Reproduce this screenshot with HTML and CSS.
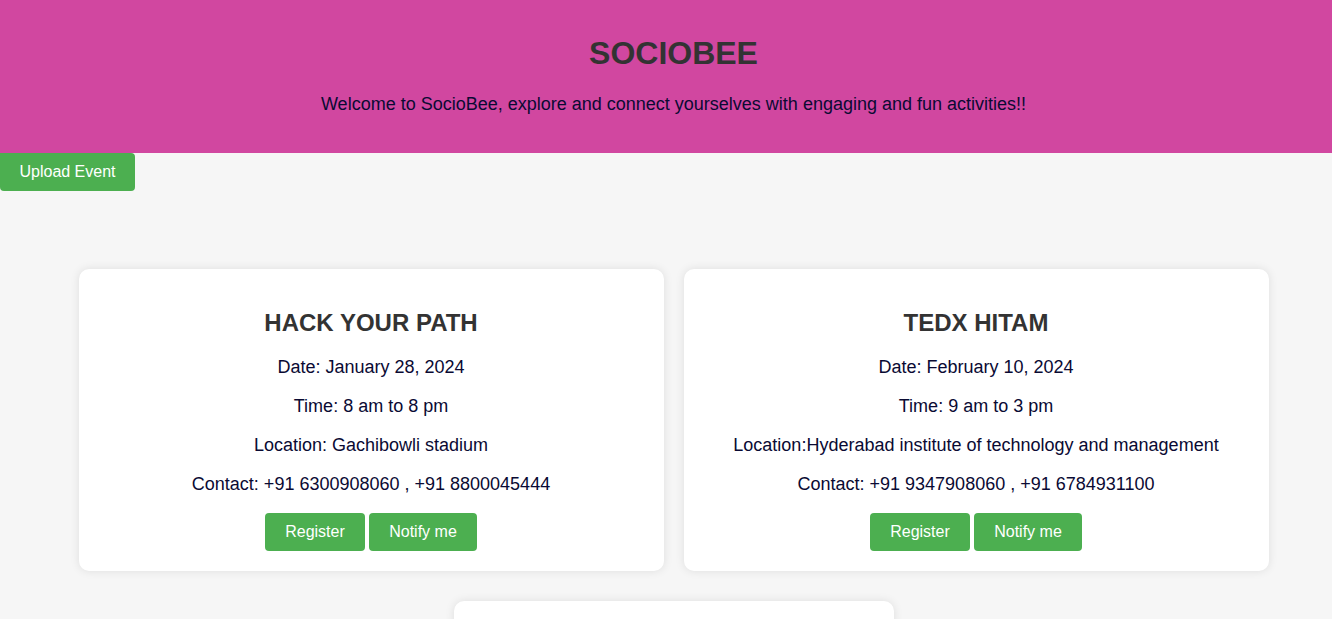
FILE: index.html
```html
<!DOCTYPE html>
<html lang="en">
<head>
<meta charset="utf-8">
<title>SocioBee</title>
<link rel="stylesheet" href="styles.css">
</head>
<body>
<header class="hero">
  <h1 class="hero__title">SOCIOBEE</h1>
  <p class="hero__tagline">Welcome to SocioBee, explore and connect yourselves with engaging and fun activities!!</p>
</header>
<button class="btn btn--upload">Upload Event</button>
<main class="events">
  <section class="card card--wide">
    <h2 class="card__title">HACK YOUR PATH</h2>
    <p class="card__line">Date: January 28, 2024</p>
    <p class="card__line">Time: 8 am to 8 pm</p>
    <p class="card__line">Location: Gachibowli stadium</p>
    <p class="card__line">Contact: +91 6300908060 , +91 8800045444</p>
    <div class="card__actions"><button class="btn">Register</button> <button class="btn">Notify me</button></div>
  </section>
  <section class="card card--wide">
    <h2 class="card__title">TEDX HITAM</h2>
    <p class="card__line">Date: February 10, 2024</p>
    <p class="card__line">Time: 9 am to 3 pm</p>
    <p class="card__line">Location:Hyderabad institute of technology and management</p>
    <p class="card__line">Contact: +91 9347908060 , +91 6784931100</p>
    <div class="card__actions"><button class="btn">Register</button> <button class="btn">Notify me</button></div>
  </section>
  <section class="card card--narrow">
    <h2 class="card__title">&nbsp;</h2>
  </section>
</main>
</body>
</html>
```
FILE: styles.css
```css
* { box-sizing: border-box; }
html, body { margin: 0; }
body {
  background: #f6f6f6;
  font-family: "Liberation Sans", Arial, sans-serif;
  color: #0a0a33;
}
.hero {
  background: #d147a0;
  text-align: center;
  padding: 13px 0 22px 15px;
}
.hero__title {
  margin: 22px 0;
  font-size: 32px;
  font-weight: bold;
  color: #333333;
}
.hero__tagline {
  margin: 0 0 16px;
  font-size: 18px;
  line-height: 21px;
}
.btn {
  display: inline-block;
  background: #4caf50;
  color: #ffffff;
  border: none;
  border-radius: 4px;
  padding: 10px 20px;
  font-family: "Liberation Sans", Arial, sans-serif;
  font-size: 16px;
  line-height: 18px;
  cursor: pointer;
}
.btn--upload {
  display: block;
  width: 135px;
  padding: 10px 0;
  border-radius: 0 4px 4px 4px;
}
.events {
  display: flex;
  flex-wrap: wrap;
  justify-content: center;
  gap: 30px 20px;
  padding: 78px 0 0 15px;
}
.card {
  background: #ffffff;
  border-radius: 10px;
  box-shadow: 0 0 10px rgba(0, 0, 0, 0.1);
  padding: 20px;
  text-align: center;
}
.card--wide { width: 585px; }
.card--narrow { width: 440px; height: 200px; }
.card__title {
  margin: 20px 0;
  font-size: 24px;
  color: #333333;
}
.card__line {
  margin: 18px 0;
  font-size: 18px;
  line-height: 21px;
}
.card__actions {
  margin-top: 18px;
  font-size: 16px;
}
```
